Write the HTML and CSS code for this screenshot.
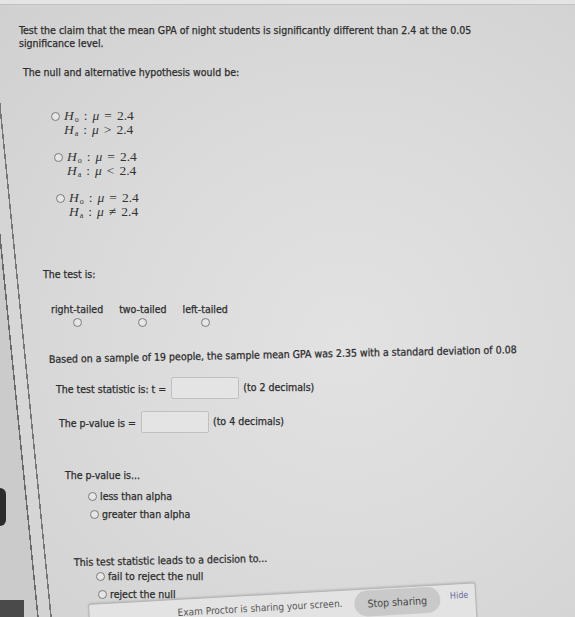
FILE: index.html
```html
<!DOCTYPE html>
<html>
<head>
<meta charset="utf-8">
<link rel="stylesheet" href="styles.css">
</head>
<body>
<div class="screen">
  <div class="topbar"></div>
  <div class="content">
    <p class="title">Test the claim that the mean GPA of night students is significantly different than 2.4 at the 0.05 significance level.</p>
    <p class="intro">The null and alternative hypothesis would be:</p>

    <div class="hyps">
      <div class="hyp h1">
        <span class="radio"></span>
        <div class="math">
          <div><i>H</i><sub>o</sub><span class="op">:</span><i>μ</i><span class="op">=</span>2.4</div>
          <div><i>H</i><sub>a</sub><span class="op">:</span><i>μ</i><span class="op">&gt;</span>2.4</div>
        </div>
      </div>
      <div class="hyp h2">
        <span class="radio"></span>
        <div class="math">
          <div><i>H</i><sub>o</sub><span class="op">:</span><i>μ</i><span class="op">=</span>2.4</div>
          <div><i>H</i><sub>a</sub><span class="op">:</span><i>μ</i><span class="op">&lt;</span>2.4</div>
        </div>
      </div>
      <div class="hyp h3">
        <span class="radio"></span>
        <div class="math">
          <div><i>H</i><sub>o</sub><span class="op">:</span><i>μ</i><span class="op">=</span>2.4</div>
          <div><i>H</i><sub>a</sub><span class="op">:</span><i>μ</i><span class="op">≠</span>2.4</div>
        </div>
      </div>
    </div>

    <p class="testis">The test is:</p>
    <div class="tails">
      <div class="tail"><span>right-tailed</span><span class="radio"></span></div>
      <div class="tail"><span>two-tailed</span><span class="radio"></span></div>
      <div class="tail"><span>left-tailed</span><span class="radio"></span></div>
    </div>

    <p class="based">Based on a sample of 19 people, the sample mean GPA was 2.35 with a standard deviation of 0.08</p>

    <div class="field f1"><span>The test statistic is: t =</span><span class="box"></span><span class="hint">(to 2 decimals)</span></div>
    <div class="field f2"><span>The p-value is =</span><span class="box"></span><span class="hint">(to 4 decimals)</span></div>

    <p class="q q1">The p-value is...</p>
    <div class="opts o1">
      <div class="opt"><span class="radio"></span>less than alpha</div>
      <div class="opt"><span class="radio"></span>greater than alpha</div>
    </div>

    <p class="q q2">This test statistic leads to a decision to...</p>
    <div class="opts o2">
      <div class="opt"><span class="radio"></span>fail to reject the null</div>
      <div class="opt"><span class="radio"></span>reject the null</div>
    </div>
  </div>

  <div class="sharebar">
    <span class="sharetext">Exam Proctor is sharing your screen.</span>
    <span class="stop">Stop sharing</span>
    <span class="hide">Hide</span>
  </div>
  <div class="clip"></div>
  <div class="dark"></div>
</div>
</body>
</html>
```

FILE: styles.css
```css
html, body {
  margin: 0;
  padding: 0;
}
html {
  overflow: hidden;
}
body {
  width: 575px;
  height: 617px;
  overflow: hidden;
  font-family: "DejaVu Sans Condensed", "DejaVu Sans", sans-serif;
  font-size: 10.5px;
  color: #2c2c2c;
}
.screen {
  position: relative;
  width: 575px;
  height: 617px;
  overflow: hidden;
  background:
    linear-gradient(84.3deg, transparent 37px, #6a6a6a 37px, #6a6a6a 38.5px, transparent 38.5px, transparent 50px, #777 50px, #777 51.5px, transparent 51.5px),
    linear-gradient(84.3deg, #cbcbcb 0, #cbcbcb 37px, rgba(0,0,0,0) 37px),
    radial-gradient(ellipse at 60% 55%, #e2e2e2 0%, #dbdbdb 45%, #d0d0d0 100%);
}
.content p, .content .field, .content .opt, .content .tail {
  -webkit-text-stroke: 0.25px #2c2c2c;
}
.topbar {
  height: 4px;
  background: #e4e4e4;
  border-bottom: 1px solid #c2c2c2;
}
.content {
  padding-top: 19px;
}
p { margin: 0; }
.title {
  margin-left: 19px;
  width: 500px;
  line-height: 13px;
}
.intro {
  margin: 16px 0 0 23px;
  line-height: 13px;
}
.hyps {
  margin-top: 30px;
  display: flex;
  flex-direction: column;
  gap: 13px;
}
.hyp {
  display: flex;
  align-items: flex-start;
  gap: 4px;
}
.h1 { margin-left: 51px; }
.h2 { margin-left: 54px; }
.h3 { margin-left: 56px; }
.radio {
  display: inline-block;
  width: 7px;
  height: 7px;
  border: 1px solid #7a7a7a;
  border-radius: 50%;
  background: #e6e6e6;
  flex: none;
  -webkit-text-stroke: 0;
}
.hyp .radio { margin-top: 3px; }
.math {
  font-family: "Liberation Serif", "DejaVu Serif", serif;
  font-size: 13.5px;
  line-height: 14px;
  color: #333;
  white-space: nowrap;
}
.math i { font-style: italic; }
.math .op {
  display: inline-block;
  margin: 0 5px;
}
.math sub {
  font-size: 8px;
  vertical-align: -2px;
  line-height: 0;
  margin-left: 1px;
}
.testis {
  margin: 49px 0 0 43px;
  line-height: 13px;
}
.tails {
  margin: 22px 0 0 51px;
  display: flex;
  gap: 16px;
}
.tail {
  display: flex;
  flex-direction: column;
  align-items: center;
  line-height: 13px;
}
.tail .radio { margin-top: 2px; }
.based {
  margin: 26px 0 0 49px;
  line-height: 13px;
  white-space: nowrap;
  transform: rotate(-1.2deg);
  transform-origin: left center;
}
.field {
  display: flex;
  align-items: center;
  line-height: 13px;
}
.f1 { margin: 14px 0 0 56px; }
.f2 { margin: 15px 0 0 59px; }
.box {
  width: 66px;
  height: 20px;
  border: 1px solid #c0c0c0;
  background: #e4e4e4;
  margin-left: 5px;
  margin-top: -3px;
  border-radius: 2px;
}
.hint {
  margin-left: 4px;
  margin-top: -5px;
}
.q { line-height: 13px; }
.q1 { margin: 36px 0 0 65px; }
.opts {
  display: flex;
  flex-direction: column;
  gap: 5px;
  margin-top: 8px;
}
.opt {
  display: flex;
  align-items: center;
  gap: 3px;
  line-height: 13px;
}
.o1 .opt:nth-child(1) { margin-left: 88px; }
.o1 .opt:nth-child(2) { margin-left: 90px; }
.q2 {
  margin: 35px 0 0 74px;
  transform: rotate(-1.2deg);
  transform-origin: left center;
}
.o2 { margin-top: 1px; gap: 5px; }
.o2 .opt:nth-child(1) { margin-left: 96px; }
.o2 .opt:nth-child(2) { margin-left: 98px; }

.sharebar {
  position: absolute;
  left: 88px;
  top: 604px;
  width: 388px;
  height: 44px;
  background: #e3e3e3;
  border: 1px solid #b4b4b4;
  border-radius: 3px;
  box-shadow: 0 -1px 2px rgba(0,0,0,0.12);
  display: flex;
  align-items: flex-start;
  white-space: nowrap;
  box-sizing: border-box;
  transform: rotate(-3.2deg);
  transform-origin: left top;
}
.sharetext {
  margin-left: 88px;
  margin-top: 7px;
  color: #555;
  font-size: 10px;
}
.stop {
  margin-left: 12px;
  background: #c9c9c9;
  border-radius: 14px;
  padding: 7px 13px;
  margin-top: 1px;
  color: #444;
  font-size: 10.5px;
}
.hide {
  margin-left: 10px;
  margin-top: 6px;
  color: #6b6aa0;
  font-size: 9px;
}
.clip {
  position: absolute;
  left: 0;
  top: 488px;
  width: 6px;
  height: 38px;
  background: #2c2c2c;
  border-radius: 0 6px 6px 0;
}
.dark {
  position: absolute;
  left: 0;
  top: 600px;
  width: 24px;
  height: 17px;
  background: #4a4a4a;
}
```
